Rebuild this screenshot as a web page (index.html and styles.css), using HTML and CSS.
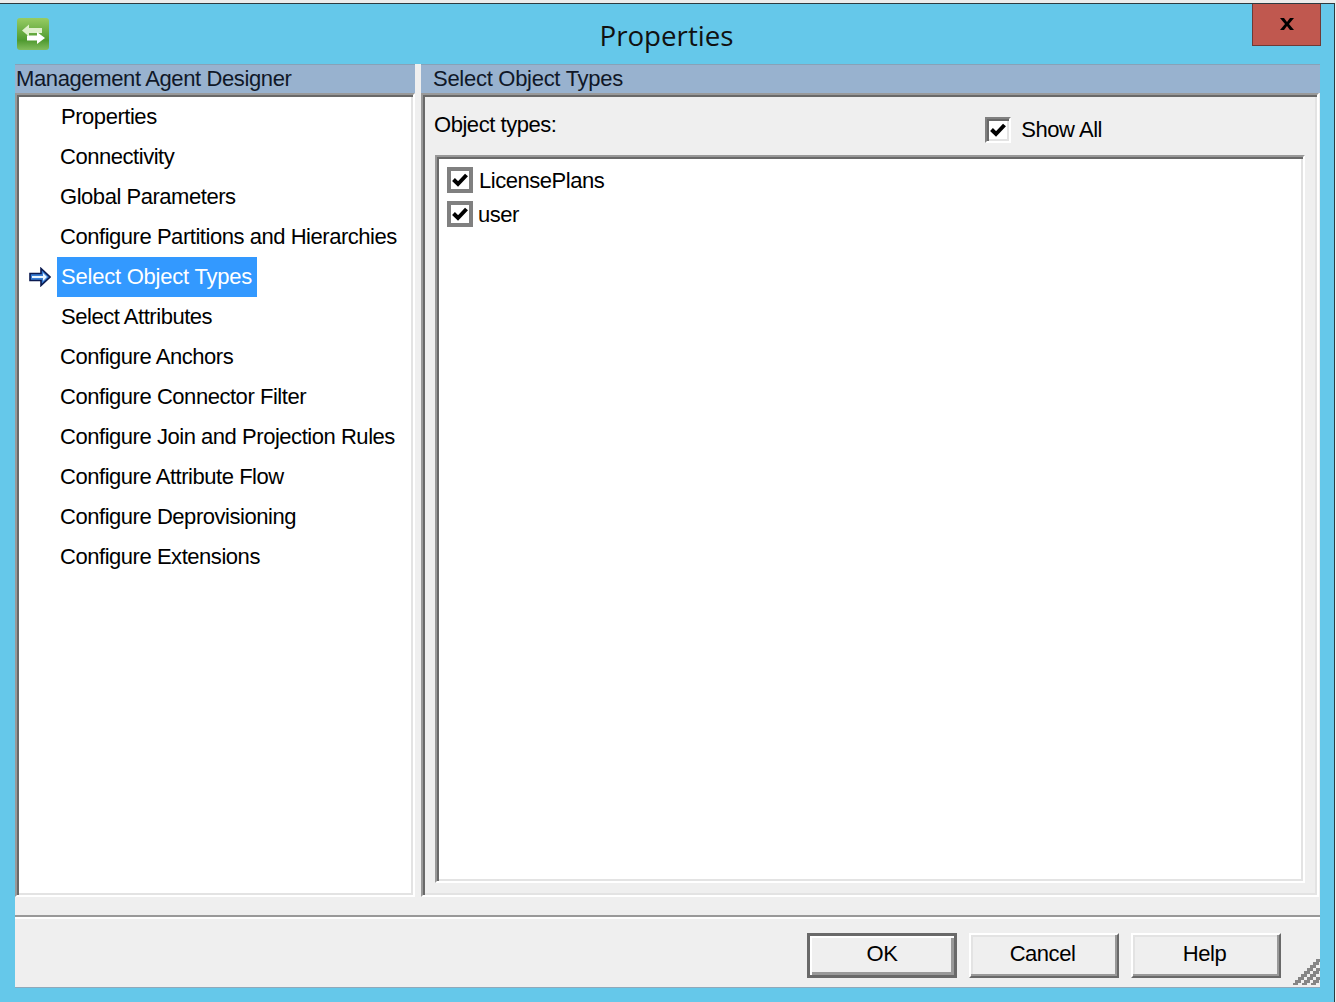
FILE: index.html
```html
<!DOCTYPE html>
<html lang="en">
<head>
<meta charset="utf-8">
<title>Properties</title>
<link rel="stylesheet" href="styles.css">
</head>
<body>
<div class="window">
  <div class="titlebar">
    <svg class="app-icon" viewBox="0 0 32 32" aria-hidden="true">
      <defs>
        <linearGradient id="g" x1="0" y1="0" x2="0" y2="1">
          <stop offset="0" stop-color="#97cc63"/>
          <stop offset="0.7" stop-color="#4f9a30"/>
          <stop offset="1" stop-color="#83bd5f"/>
        </linearGradient>
      </defs>
      <rect x="0" y="0" width="32" height="32" rx="3" fill="url(#g)"/>
      <path d="M5 12.5 L12 6.5 V10 H25 V15 H12 V18.5 Z" fill="#dff0cc"/>
      <path d="M28 20 L20 14 V17.5 H10 V22.5 H20 V26 Z" fill="#ffffff"/>
    </svg>
    <h1 class="title">Properties</h1>
    <button class="close" aria-label="Close">
      <svg viewBox="0 0 16 14" class="close-x" aria-hidden="true"><path d="M1 1 H5 L8 5 L11 1 H15 L10 7 L15 13 H11 L8 9 L5 13 H1 L6 7 Z" fill="#000"/></svg>
    </button>
  </div>
  <div class="dialog">
    <div class="panes">
      <section class="pane pane-left">
        <h2 class="head">Management Agent Designer</h2>
        <div class="sunken nav-box">
          <ul class="nav">
            <li class="item nudge">Properties</li>
            <li class="item">Connectivity</li>
            <li class="item">Global Parameters</li>
            <li class="item">Configure Partitions and Hierarchies</li>
            <li class="item current">
              <svg class="arrow" viewBox="0 0 22 20" aria-hidden="true">
                <path d="M1 6.5 H12 V1.5 L21 10 L12 18.5 V13.5 H1 Z" fill="#3a7fd6" stroke="#0a1a50" stroke-width="1.6"/>
                <path d="M3 9 H14 V6 L18 10 L14 14 V11 H3 Z" fill="#e8f6ff"/>
              </svg>
              <span class="selected">Select Object Types</span>
            </li>
            <li class="item nudge">Select Attributes</li>
            <li class="item">Configure Anchors</li>
            <li class="item">Configure Connector Filter</li>
            <li class="item">Configure Join and Projection Rules</li>
            <li class="item">Configure Attribute Flow</li>
            <li class="item">Configure Deprovisioning</li>
            <li class="item">Configure Extensions</li>
          </ul>
        </div>
      </section>
      <section class="pane pane-right">
        <h2 class="head">Select Object Types</h2>
        <div class="sunken body-box">
          <div class="types-row">
            <span class="types-label">Object types:</span>
            <label class="show-all">
              <span class="box-3d">
                <svg class="tick" viewBox="0 0 16 14" aria-hidden="true"><path d="M1.5 6.5 L6 11 L14.5 2" fill="none" stroke="#000" stroke-width="4"/></svg>
              </span>
              <span>Show All</span>
            </label>
          </div>
          <div class="sunken list-box">
            <div class="check-row">
              <span class="box-flat"><svg class="tick" viewBox="0 0 16 14" aria-hidden="true"><path d="M1.5 6.5 L6 11 L14.5 2" fill="none" stroke="#000" stroke-width="4"/></svg></span>
              <span class="check-text lp">LicensePlans</span>
            </div>
            <div class="check-row">
              <span class="box-flat"><svg class="tick" viewBox="0 0 16 14" aria-hidden="true"><path d="M1.5 6.5 L6 11 L14.5 2" fill="none" stroke="#000" stroke-width="4"/></svg></span>
              <span class="check-text">user</span>
            </div>
          </div>
        </div>
      </section>
    </div>
    <div class="divider"></div>
    <div class="footer">
      <button class="btn default">OK</button>
      <button class="btn">Cancel</button>
      <button class="btn">Help</button>
      <svg class="grip" viewBox="0 0 27 27" shape-rendering="crispEdges" aria-hidden="true">
        <path d="M0 26 h3 v-3 h3 v-3 h3 v-3 h3 v-3 h3 v-3 h3 v-3 h3 v-3 h3 v-3 h3" stroke="#858585" stroke-width="3" fill="none"/>
        <path d="M9 26 h3 v-3 h3 v-3 h3 v-3 h3 v-3 h3 v-3 h3" stroke="#858585" stroke-width="3" fill="none"/>
        <path d="M18 26 h3 v-3 h3 v-3 h3" stroke="#858585" stroke-width="3" fill="none"/>
      </svg>
    </div>
  </div>
</div>
</body>
</html>
```
FILE: styles.css
```css
* { box-sizing: border-box; }
html { background: #ececec; }
html, body { margin: 0; padding: 0; }
body {
  font-family: "Liberation Sans", Arial, sans-serif;
  font-size: 22px;
  letter-spacing: -0.46px;
  color: #000;
}
.window {
  width: 1335px;
  height: 999px;
  margin-top: 3px;
  background: #65c8ea;
  border-top: 1px solid #2d3a40;
  border-right: 1px solid #2d3a40;
  overflow: hidden;
}
.titlebar {
  height: 60px;
  display: flex;
  align-items: flex-start;
  position: relative;
}
.app-icon {
  width: 32px;
  height: 32px;
  margin: 14px 0 0 17px;
  flex: none;
}
.title {
  margin: 0;
  position: absolute;
  left: 0;
  right: 1px;
  top: 13px;
  text-align: center;
  font-family: "Open Sans", sans-serif;
  font-weight: 400;
  font-size: 27.7px;
  letter-spacing: 0;
  line-height: 36px;
  color: #111;
}
.close {
  position: absolute;
  left: 1252px;
  top: 0;
  width: 69px;
  height: 42px;
  background: #c0584f;
  border: 1px solid #6f3a36;
  border-top: 0;
  padding: 0;
  display: flex;
  align-items: center;
  justify-content: center;
}
.close-x { width: 16px; height: 14px; margin-top: -1px; }
.dialog {
  margin-left: 15px;
  width: 1305px;
  height: 923px;
  background: #efefef;
  box-shadow: 0 1px 0 #8fa9bb;
  display: flex;
  flex-direction: column;
}
.panes {
  height: 833px;
  display: flex;
  gap: 6px;
}
.pane { display: flex; flex-direction: column; }
.pane-left { width: 400px; flex: none; }
.pane-right { flex: 1; }
.head {
  margin: 0;
  height: 29px;
  background: #98b2cf;
  border-top: 1px solid #87a2b8;
  font-weight: 400;
  font-size: 22px;
  letter-spacing: -0.28px;
  line-height: 28px;
  white-space: nowrap;
  color: #101828;
}
.pane-right .head { padding-left: 12px; }
.pane-left .head { padding-left: 1px; letter-spacing: -0.38px; }
.sunken {
  border: 2px solid;
  border-color: #999 #fff #fff #999;
  box-shadow: inset 2px 2px 0 #696969, inset -2px -2px 0 #e3e3e3;
}
.nav-box {
  flex: 1;
  background: #fff;
  padding: 2px 0 0 2px;
}
.nav { list-style: none; margin: 0; padding: 0; }
.item {
  height: 40px;
  line-height: 40px;
  padding-left: 41px;
  white-space: nowrap;
}
.item.nudge { padding-left: 42px; }
.current {
  display: flex;
  padding-left: 10px;
  align-items: center;
}
.arrow { width: 22px; height: 20px; flex: none; margin-right: 6px; }
.selected {
  background: #3399ff;
  color: #fff;
  height: 40px;
  width: 200px;
  padding-left: 4px;
  letter-spacing: -0.22px;
}
.body-box {
  flex: 1;
  margin-right: 1px;
  display: flex;
  flex-direction: column;
  padding: 4px 12px 12px 11px;
}
.types-row {
  height: 56px;
  display: flex;
  justify-content: space-between;
}
.types-label { line-height: 52px; }
.show-all {
  display: flex;
  align-items: flex-start;
  gap: 10px;
  margin: 18px 203px 0 0;
  line-height: 26px;
}
.box-3d {
  width: 26px;
  height: 26px;
  background: #fff;
  border: 2px solid;
  border-color: #808080 #fff #fff #808080;
  box-shadow: inset 2px 2px 0 #696969, inset -2px -2px 0 #e3e3e3;
  display: flex;
  align-items: center;
  justify-content: center;
}
.tick { width: 16px; height: 14px; }
.list-box {
  flex: 1;
  margin-left: 1px;
  background: #fff;
  padding: 6px 0 0 10px;
}
.check-row {
  height: 34px;
  display: flex;
  align-items: center;
  gap: 5px;
}
.check-text { padding-top: 2px; }
.box-flat {
  width: 26px;
  height: 26px;
  background: #fff;
  border: 4px solid #808080;
  display: flex;
  align-items: center;
  justify-content: center;
  flex: none;
}
.lp { margin-left: 1px; }
.divider {
  margin-top: 18px;
  height: 4px;
  border-top: 2px solid #999;
  border-bottom: 2px solid #fff;
  flex: none;
}
.footer {
  flex: 1;
  display: flex;
  justify-content: flex-end;
  gap: 12px;
  padding: 14px 39px 0 0;
  position: relative;
}
.btn {
  width: 150px;
  height: 45px;
  background: #efefef;
  font: inherit;
  letter-spacing: inherit;
  color: #000;
  padding: 0 3px 3px 0;
  border: 2px solid;
  border-color: #fff #696969 #696969 #fff;
  box-shadow: inset -2px -2px 0 #999, inset 2px 2px 0 #e3e3e3;
}
.btn.default {
  border-color: #696969;
  border-width: 3px;
  padding: 0 0 3px;
  box-shadow: inset 2px 2px 0 #fff, inset -3px -3px 0 #999;
}
.grip {
  position: absolute;
  right: 0;
  bottom: 2px;
  width: 27px;
  height: 27px;
}
```
